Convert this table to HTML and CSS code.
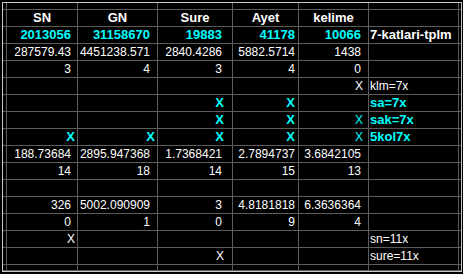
FILE: index.html
```html
<!DOCTYPE html>
<html>
<head>
<meta charset="utf-8">
<link rel="stylesheet" href="styles.css">
</head>
<body>
<div class="frame">
  <div class="sheet">
    <div></div><div></div><div></div><div></div><div></div><div></div><div></div><div></div>

    <div></div><div class="h">SN</div><div class="h">GN</div><div class="h">Sure</div><div class="h">Ayet</div><div class="h">kelime</div><div></div><div></div>
    <div></div><div class="cy">2013056</div><div class="cy">31158670</div><div class="cy">19883</div><div class="cy">41178</div><div class="cy">10066</div><div class="t b">7-katlari-tplm</div><div></div>
    <div></div><div>287579.43</div><div>4451238.571</div><div>2840.4286</div><div>5882.5714</div><div>1438</div><div></div><div></div>
    <div></div><div>3</div><div>4</div><div>3</div><div>4</div><div>0</div><div></div><div></div>
    <div></div><div></div><div></div><div></div><div></div><div class="x">X</div><div class="t">klm=7x</div><div></div>
    <div></div><div></div><div></div><div class="cy x">X</div><div class="cy x">X</div><div></div><div class="t cy">sa=7x</div><div></div>
    <div></div><div></div><div></div><div class="cy x">X</div><div class="cy x">X</div><div class="cyl x">X</div><div class="t cy">sak=7x</div><div></div>
    <div></div><div class="cy x">X</div><div class="cy x">X</div><div class="cy x">X</div><div class="cy x">X</div><div class="cyl x">X</div><div class="t cy">5kol7x</div><div></div>
    <div></div><div>188.73684</div><div>2895.947368</div><div>1.7368421</div><div>2.7894737</div><div>3.6842105</div><div></div><div></div>
    <div></div><div>14</div><div>18</div><div>14</div><div>15</div><div>13</div><div></div><div></div>
    <div></div><div></div><div></div><div></div><div></div><div></div><div></div><div></div>
    <div></div><div>326</div><div>5002.090909</div><div>3</div><div>4.8181818</div><div>6.3636364</div><div></div><div></div>
    <div></div><div>0</div><div>1</div><div>0</div><div>9</div><div>4</div><div></div><div></div>
    <div></div><div class="x">X</div><div></div><div></div><div></div><div></div><div class="t">sn=11x</div><div></div>
    <div></div><div></div><div></div><div class="x">X</div><div></div><div></div><div class="t">sure=11x</div><div></div>

    <div></div><div></div><div></div><div></div><div></div><div></div><div></div><div></div>
    <div></div><div></div><div></div><div></div><div></div><div></div><div></div><div></div>
  </div>
</div>
</body>
</html>
```
FILE: styles.css
```css
html, body {
  margin: 0;
  padding: 0;
  background: #000;
}
body {
  width: 463px;
  height: 274px;
  overflow: hidden;
  font-family: "Liberation Sans", Arial, sans-serif;
  font-size: 12px;
  color: #fff;
}
.frame {
  margin: 2px 0 0 2px;
  width: 458px;
  border: 1px solid #c8c8c8;
}
.sheet {
  display: grid;
  grid-template-columns: 3px 70px 79px 74px 65px 69px 89px 2px;
  grid-template-rows: 6px repeat(15, 16px) 5px 0px;
  gap: 1px;
  background: #5c5c5c;
}
.sheet > div {
  background: #000;
  line-height: 16px;
  white-space: nowrap;
  overflow: hidden;
  text-align: right;
}
.sheet > div:nth-child(8n+2) { padding-right: 6px; }
.sheet > div:nth-child(8n+3) { padding-right: 7px; }
.sheet > div:nth-child(8n+4) { padding-right: 10px; }
.sheet > div:nth-child(8n+5) { padding-right: 3px; }
.sheet > div:nth-child(8n+6) { padding-right: 7px; }
.sheet > div:nth-child(8n+2).x { padding-right: 2px; }
.sheet > div:nth-child(8n+3).x { padding-right: 2px; }
.sheet > div:nth-child(8n+4).x { padding-right: 8px; }
.sheet > div:nth-child(8n+5).x { padding-right: 3px; }
.sheet > div:nth-child(8n+6).x { padding-right: 5px; }
.sheet > div.h {
  text-align: center;
  font-weight: bold;
  font-size: 13px;
  padding-right: 0;
}
.sheet > div.cy {
  color: #00ffff;
  font-weight: bold;
  font-size: 13px;
}
.sheet > div.cyl {
  color: #00ffff;
}
.sheet > div.t {
  text-align: left;
  padding: 0 0 0 1px;
}
.sheet > div.b {
  font-weight: bold;
  font-size: 13px;
}
```
